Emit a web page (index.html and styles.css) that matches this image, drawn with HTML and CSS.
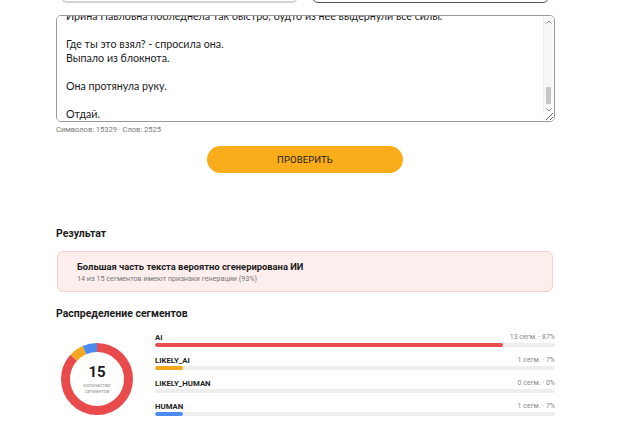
FILE: index.html
```html
<!DOCTYPE html>
<html lang="ru">
<head>
<meta charset="utf-8">
<title>Проверка текста</title>
<link rel="stylesheet" href="styles.css">
</head>
<body>
<main class="page">
  <div class="top-row">
    <div class="top-box top-box--soft"></div>
    <div class="top-box top-box--outline"></div>
  </div>

  <div class="text-wrap">
    <textarea class="text-input" id="text" spellcheck="false">Утро выдалось серым и тихим. В коридоре пахло старой бумагой и остывшим чаем.
Он долго стоял у двери, не решаясь постучать.

Наконец дверь открылась сама.

— Проходи, — сказала Ирина Павловна, не поднимая глаз от стола.

Он вошёл и сел на край стула. Блокнот лежал у него на коленях, и он всё время поправлял загнутый уголок обложки.

— Ты принёс? — спросила она.
— Принёс.

Он положил на стол сложенный вдвое листок. Она развернула его, прочитала первую строку и замерла.

Ирина Павловна побледнела так быстро, будто из нее выдернули все силы.

Где ты это взял? - спросила она.
Выпало из блокнота.

Она протянула руку.

Отдай.</textarea>
    <div class="fake-scroll" aria-hidden="true">
      <svg class="sb-arrow" width="6" height="4" viewBox="0 0 6 4"><path d="M0.5 3.5 L3 1 L5.5 3.5" fill="none" stroke="#8a8a8a" stroke-width="1"/></svg>
      <div class="sb-track"><div class="sb-thumb"></div></div>
      <svg class="sb-arrow" width="6" height="4" viewBox="0 0 6 4"><path d="M0.5 0.5 L3 3 L5.5 0.5" fill="none" stroke="#8a8a8a" stroke-width="1"/></svg>
    </div>
  </div>
  <p class="counter">Символов: 15329 · Слов: 2525</p>

  <div class="actions">
    <button class="check-btn" type="button">ПРОВЕРИТЬ</button>
  </div>

  <h2 class="section-title section-title--result">Результат</h2>
  <div class="verdict">
    <p class="verdict-title">Большая часть текста вероятно сгенерирована ИИ</p>
    <p class="verdict-sub">14 из 15 сегментов имеют признаки генерации (93%)</p>
  </div>

  <h2 class="section-title section-title--dist">Распределение сегментов</h2>
  <div class="dist">
    <div class="donut">
      <svg width="72" height="72" viewBox="0 0 72 72">
        <g transform="rotate(-90 36 36)">
          <circle cx="36" cy="36" r="31.5" fill="none" stroke="#e94a4c" stroke-width="9" stroke-dasharray="171.5 26.4"/>
          <circle cx="36" cy="36" r="31.5" fill="none" stroke="#f3a71f" stroke-width="9" stroke-dasharray="13.2 184.7" stroke-dashoffset="-171.5"/>
          <circle cx="36" cy="36" r="31.5" fill="none" stroke="#4b8bef" stroke-width="9" stroke-dasharray="13.2 184.7" stroke-dashoffset="-184.7"/>
        </g>
      </svg>
      <div class="donut-center">
        <span class="donut-num">15</span>
        <span class="donut-cap">количество<br>сегментов</span>
      </div>
    </div>
    <div class="bars">
      <div class="bar-row">
        <div class="bar-head"><span class="bar-label">AI</span><span class="bar-val">13 сегм. · 87%</span></div>
        <div class="track"><div class="fill fill--ai" style="width:87%"></div></div>
      </div>
      <div class="bar-row">
        <div class="bar-head"><span class="bar-label">LIKELY_AI</span><span class="bar-val">1 сегм. · 7%</span></div>
        <div class="track"><div class="fill fill--likely-ai" style="width:7%"></div></div>
      </div>
      <div class="bar-row">
        <div class="bar-head"><span class="bar-label">LIKELY_HUMAN</span><span class="bar-val">0 сегм. · 0%</span></div>
        <div class="track"><div class="fill fill--likely-human" style="width:0%"></div></div>
      </div>
      <div class="bar-row">
        <div class="bar-head"><span class="bar-label">HUMAN</span><span class="bar-val">1 сегм. · 7%</span></div>
        <div class="track"><div class="fill fill--human" style="width:7%"></div></div>
      </div>
    </div>
  </div>
</main>
<script src="script.js"></script>
</body>
</html>
```

FILE: styles.css
```css
* { box-sizing: border-box; }

html, body {
  margin: 0;
  padding: 0;
  background: #ffffff;
  overflow: hidden;
}

body {
  font-family: Roboto, "Noto Sans", sans-serif;
  color: #222;
}

.page {
  width: 499px;
  margin-left: 56px;
  margin-top: -30px;
}

.top-row {
  display: flex;
  gap: 14px;
  padding: 0 6px 0 5px;
  height: 33px;
}

.top-box {
  flex: 1;
  border-radius: 6px;
}

.top-box--soft {
  background: #fff;
  border: 1px solid #e6e6e6;
  border-bottom: 2px solid #d4d4d4;
}

.top-box--outline {
  border: 1px solid #555;
}

.text-wrap {
  position: relative;
  margin-top: 12px;
}

.text-input {
  display: block;
  width: 100%;
  height: 107px;
  margin: 0;
  padding: 4px 14px 0 9px;
  border: 1px solid #9a9a9a;
  border-radius: 5px;
  font-family: Lato, "Open Sans", sans-serif;
  font-size: 10.7px;
  line-height: 14px;
  color: #1a1a1a;
  resize: vertical;
  outline: none;
  scrollbar-width: none;
}

.fake-scroll {
  position: absolute;
  top: 2px;
  right: 2px;
  bottom: 9px;
  width: 10px;
  display: flex;
  flex-direction: column;
  align-items: center;
  padding: 3px 0 1px;
  background: #f7f7f7;
  border-left: 1px solid #ececec;
}

.sb-arrow { display: block; flex: none; }

.sb-track {
  flex: 1;
  width: 100%;
  display: flex;
  flex-direction: column;
  justify-content: flex-end;
  align-items: center;
  padding: 3px 0 4px;
}

.sb-thumb {
  width: 5px;
  height: 17px;
  background: #c6c6c6;
  border-radius: 1px;
}

.counter {
  margin: 3px 0 0;
  font-size: 7.5px;
  color: #777;
}

.actions {
  display: flex;
  padding-left: 151px;
  margin-top: 12px;
}

.check-btn {
  width: 196px;
  height: 27px;
  border: none;
  border-radius: 14px;
  background: #f9ad1b;
  font-family: Roboto, sans-serif;
  font-size: 9.5px;
  color: #222;
  letter-spacing: 0.1px;
}

.section-title {
  margin: 0;
  font-weight: 700;
  font-size: 10.5px;
  color: #1b1b1b;
}

.section-title--result {
  margin-top: 54px;
}

.section-title--dist {
  margin-top: 15px;
}

.verdict {
  margin: 11px 2px 0 1px;
  height: 41px;
  padding: 9px 19px 0;
  background: #fdeeee;
  border: 1px solid #f5cfcf;
  border-radius: 6px;
}

.verdict-title {
  margin: 0;
  font-weight: 700;
  font-size: 9.4px;
  color: #1b1b1b;
}

.verdict-sub {
  margin: 2px 0 0;
  font-size: 7.2px;
  color: #777;
}

.dist {
  display: flex;
  align-items: flex-start;
  gap: 22px;
  margin-top: 12px;
}

.donut {
  position: relative;
  width: 72px;
  height: 72px;
  margin-top: 11px;
  margin-left: 5px;
  flex: none;
}

.donut svg { display: block; }

.donut-center {
  position: absolute;
  inset: 0;
  display: flex;
  flex-direction: column;
  align-items: center;
  justify-content: center;
  text-align: center;
}

.donut-num {
  font-weight: 700;
  font-size: 15px;
  line-height: 15px;
  color: #1b1b1b;
}

.donut-cap {
  margin-top: 2px;
  font-size: 5px;
  line-height: 6px;
  color: #999;
}

.bars {
  flex: 1;
  display: flex;
  flex-direction: column;
  gap: 8px;
}

.bar-row {
  display: flex;
  flex-direction: column;
  gap: 1px;
}

.bar-head {
  display: flex;
  justify-content: space-between;
  align-items: center;
  height: 10px;
}

.bar-label {
  font-weight: 700;
  font-size: 7.8px;
  color: #222;
}

.bar-val {
  font-size: 7px;
  color: #888;
}

.track {
  height: 4px;
  background: #eeeeee;
  border-radius: 2px;
  overflow: hidden;
}

.fill {
  height: 100%;
  border-radius: 2px;
}

.fill--ai { background: #e94a4c; }
.fill--likely-ai { background: #f3a71f; }
.fill--likely-human { background: #9ab; }
.fill--human { background: #4b8bef; }
```

FILE: script.js
```js
var t = document.getElementById('text');
if (t) { t.scrollTop = t.scrollHeight; }
```
